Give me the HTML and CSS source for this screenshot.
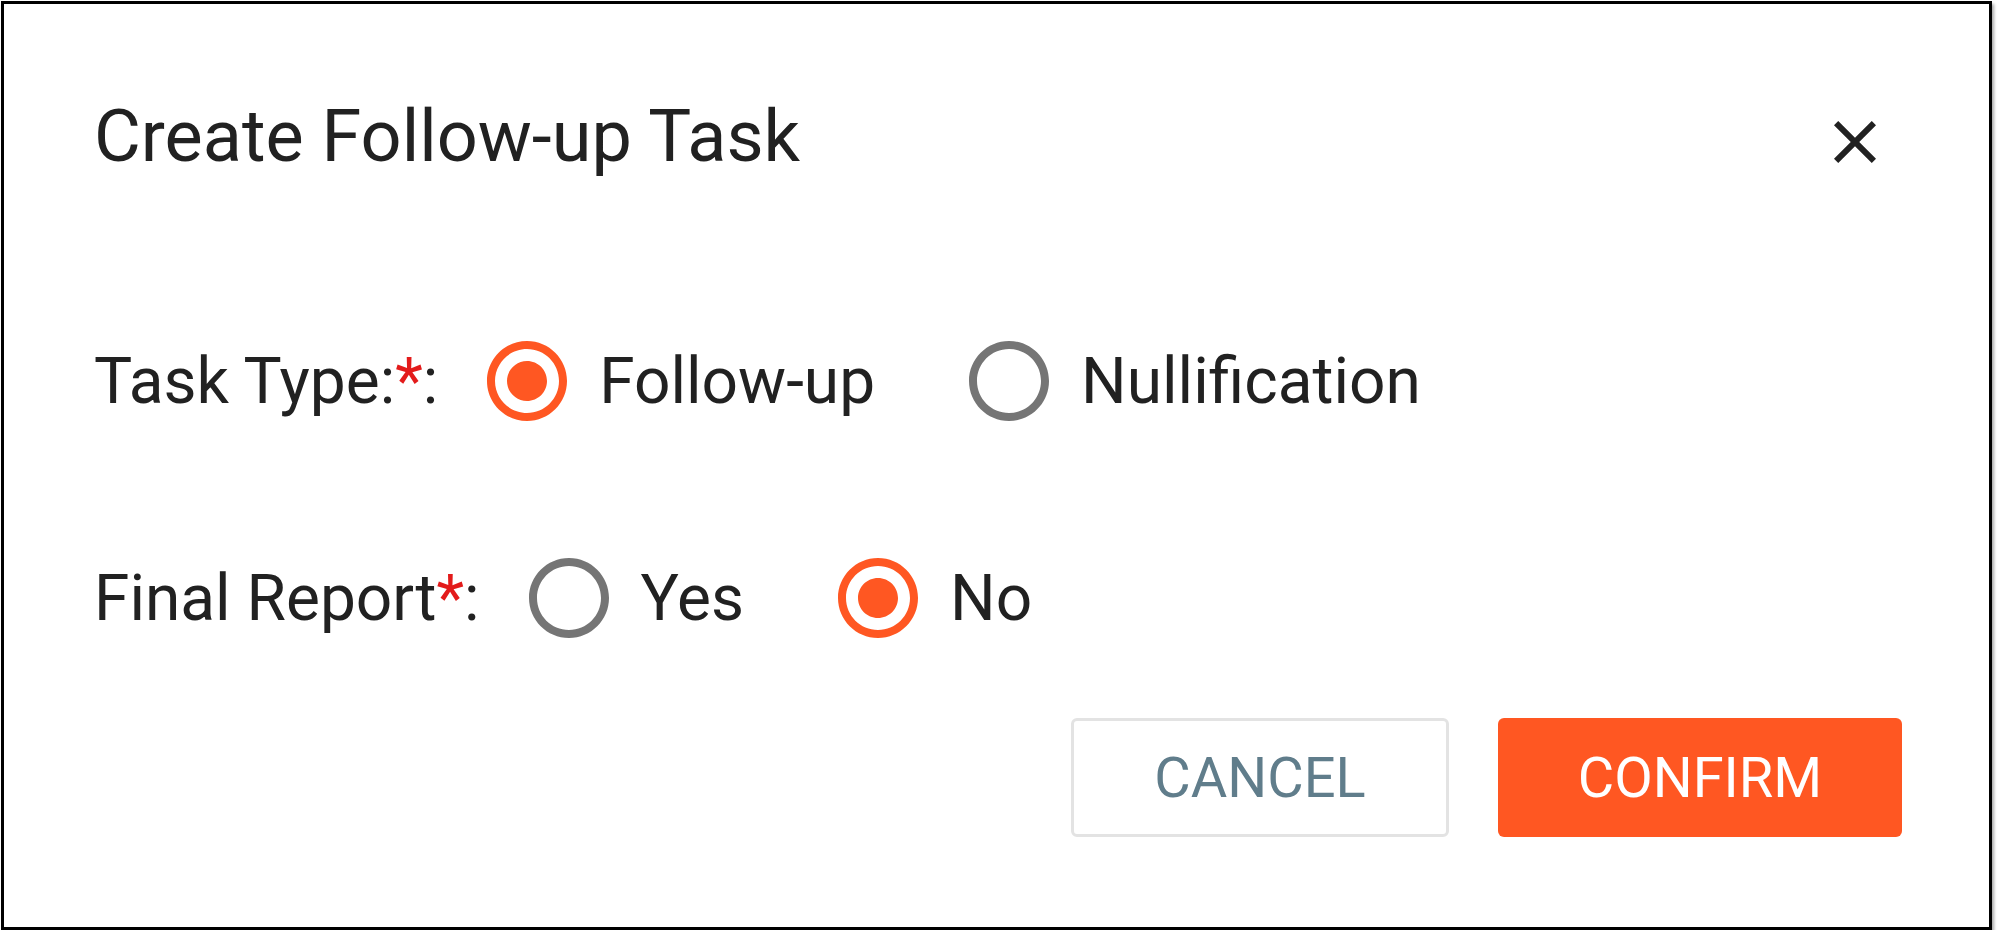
FILE: index.html
```html
<!DOCTYPE html>
<html lang="en">
<head>
<meta charset="utf-8">
<title>Create Follow-up Task</title>
<link rel="stylesheet" href="styles.css">
</head>
<body>
<div class="dialog">
  <div class="dialog-header">
    <h1 class="dialog-title">Create Follow-up Task</h1>
    <button class="close-btn" aria-label="Close">
      <svg viewBox="0 0 24 24" class="close-icon"><path d="M19 6.41L17.59 5 12 10.59 6.41 5 5 6.41 10.59 12 5 17.59 6.41 19 12 13.41 17.59 19 19 17.59 13.41 12z"/></svg>
    </button>
  </div>
  <div class="form">
    <div class="form-row">
      <span class="field-label">Task Type:<span class="req">*</span>:</span>
      <div class="radio-group">
        <label class="radio-option">
          <svg viewBox="0 0 24 24" class="radio-icon checked"><path d="M12 7c-2.76 0-5 2.24-5 5s2.24 5 5 5 5-2.24 5-5-2.24-5-5-5zm0-5C6.48 2 2 6.480 2 12s4.48 10 10 10 10-4.48 10-10S17.52 2 12 2zm0 18c-4.42 0-8-3.58-8-8s3.58-8 8-8 8 3.58 8 8-3.58 8-8 8z"/></svg>
          <span class="radio-text">Follow-up</span>
        </label>
        <label class="radio-option">
          <svg viewBox="0 0 24 24" class="radio-icon"><path d="M12 2C6.48 2 2 6.48 2 12s4.48 10 10 10 10-4.48 10-10S17.52 2 12 2zm0 18c-4.42 0-8-3.58-8-8s3.58-8 8-8 8 3.58 8 8-3.58 8-8 8z"/></svg>
          <span class="radio-text">Nullification</span>
        </label>
      </div>
    </div>
    <div class="form-row">
      <span class="field-label">Final Report<span class="req">*</span>:</span>
      <div class="radio-group">
        <label class="radio-option">
          <svg viewBox="0 0 24 24" class="radio-icon"><path d="M12 2C6.48 2 2 6.48 2 12s4.48 10 10 10 10-4.48 10-10S17.52 2 12 2zm0 18c-4.42 0-8-3.58-8-8s3.58-8 8-8 8 3.58 8 8-3.58 8-8 8z"/></svg>
          <span class="radio-text">Yes</span>
        </label>
        <label class="radio-option">
          <svg viewBox="0 0 24 24" class="radio-icon checked"><path d="M12 7c-2.76 0-5 2.24-5 5s2.24 5 5 5 5-2.24 5-5-2.24-5-5-5zm0-5C6.48 2 2 6.48 2 12s4.48 10 10 10 10-4.48 10-10S17.52 2 12 2zm0 18c-4.42 0-8-3.58-8-8s3.58-8 8-8 8 3.58 8 8-3.58 8-8 8z"/></svg>
          <span class="radio-text">No</span>
        </label>
      </div>
    </div>
  </div>
  <div class="actions">
    <button class="btn btn-cancel">CANCEL</button>
    <button class="btn btn-confirm">CONFIRM</button>
  </div>
</div>
</body>
</html>
```

FILE: styles.css
```css
* {
  box-sizing: border-box;
}

html, body {
  margin: 0;
  padding: 0;
  background: #ffffff;
}

body {
  font-family: Roboto, "Liberation Sans", Arial, sans-serif;
  color: #212121;
  padding: 1px 0 0 1px;
}

.dialog {
  width: 1991px;
  background: #ffffff;
  border: 3px solid #000000;
  box-shadow: 2px 3px 3px rgba(0, 0, 0, 0.35);
  padding: 91px 87px 90px 90px;
}

.dialog-header {
  display: flex;
  justify-content: space-between;
  align-items: flex-start;
}

.dialog-title {
  margin: 0;
  font-size: 72px;
  font-weight: 400;
  line-height: 84px;
  color: #212121;
}

.close-btn {
  margin: 11px 11px 0 0;
  padding: 0;
  border: 0;
  background: transparent;
  width: 72px;
  height: 72px;
  cursor: pointer;
}

.close-icon {
  display: block;
  width: 72px;
  height: 72px;
  fill: #212121;
}

.form {
  margin-top: 154px;
  display: flex;
  flex-direction: column;
  gap: 121px;
}

.form-row {
  display: flex;
  align-items: center;
  height: 96px;
}

.field-label {
  font-size: 64px;
  line-height: 75px;
  margin-right: 41px;
  white-space: nowrap;
}

.req {
  color: #e31b1b;
}

.radio-group {
  display: flex;
  align-items: center;
}

.radio-option {
  display: flex;
  align-items: center;
  margin-right: 86px;
  cursor: pointer;
}

.radio-icon {
  display: block;
  width: 96px;
  height: 96px;
  fill: #757575;
}

.radio-icon.checked {
  fill: #ff5722;
}

.radio-text {
  margin-left: 24px;
  font-size: 64px;
  line-height: 75px;
  color: #212121;
}

.actions {
  margin-top: 72px;
  display: flex;
  justify-content: flex-end;
  gap: 49px;
}

.btn {
  font-family: Roboto, "Liberation Sans", Arial, sans-serif;
  font-size: 56px;
  font-weight: 400;
  height: 119px;
  border-radius: 6px;
  padding: 0;
  cursor: pointer;
}

.btn-cancel {
  width: 378px;
  background: #ffffff;
  color: #607d8b;
  border: 3px solid #e3e3e3;
}

.btn-confirm {
  width: 404px;
  background: #ff5722;
  color: #ffffff;
  border: 0;
}
```
